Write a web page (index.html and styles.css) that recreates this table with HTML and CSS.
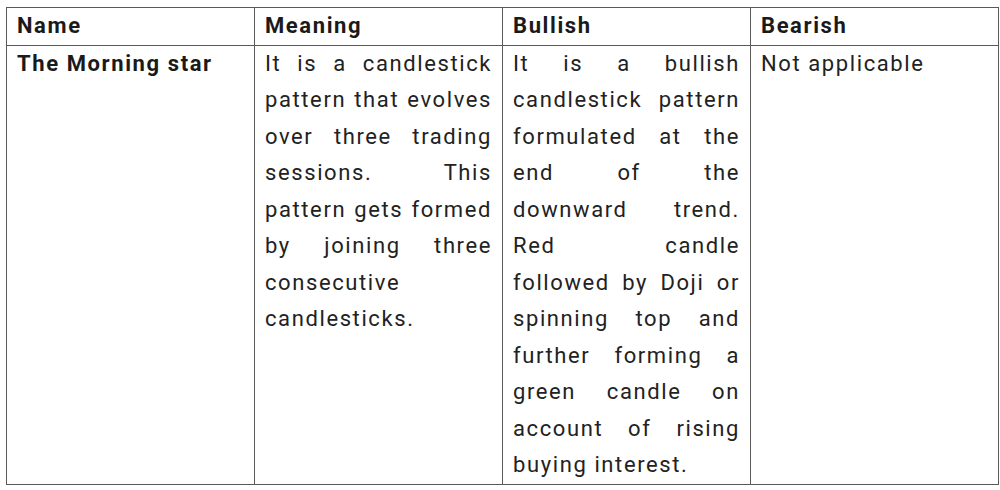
FILE: index.html
```html
<!DOCTYPE html>
<html>
<head>
<meta charset="utf-8">
<link rel="stylesheet" href="styles.css">
</head>
<body>
<table class="grid">
  <colgroup>
    <col class="c1"><col class="c2"><col class="c3"><col class="c4">
  </colgroup>
  <thead>
    <tr><th>Name</th><th>Meaning</th><th>Bullish</th><th>Bearish</th></tr>
  </thead>
  <tbody>
    <tr>
      <td class="name">The Morning star</td>
      <td class="just">It is a candlestick pattern that evolves over three trading sessions. This pattern gets formed by joining three consecutive candlesticks.</td>
      <td class="just">It is a bullish candlestick pattern formulated at the end of the downward trend. Red candle followed by Doji or spinning top and further forming a green candle on account of rising buying interest.</td>
      <td>Not applicable</td>
    </tr>
  </tbody>
</table>
</body>
</html>
```
FILE: styles.css
```css
html, body {
  margin: 0;
  padding: 0;
  background: #fff;
}
body {
  padding: 7px 0 0 6px;
  font-family: Roboto, "Liberation Sans", sans-serif;
  color: #222;
}
.grid {
  border-collapse: collapse;
  table-layout: fixed;
  width: 992px;
  font-size: 22px;
  line-height: 36.5px;
  letter-spacing: 1.6px;
}
.c1, .c2, .c3 { width: 248px; }
.c4 { width: 248px; }
.grid th, .grid td {
  border: 1px solid #5a5a5a;
  padding: 0 10px 0 10px;
  vertical-align: top;
  text-align: left;
}
.grid th {
  font-weight: 700;
  color: #1a1a1a;
}
.grid td.name {
  font-weight: 700;
  color: #1a1a1a;
}
.grid td.just {
  text-align: justify;
}
```
